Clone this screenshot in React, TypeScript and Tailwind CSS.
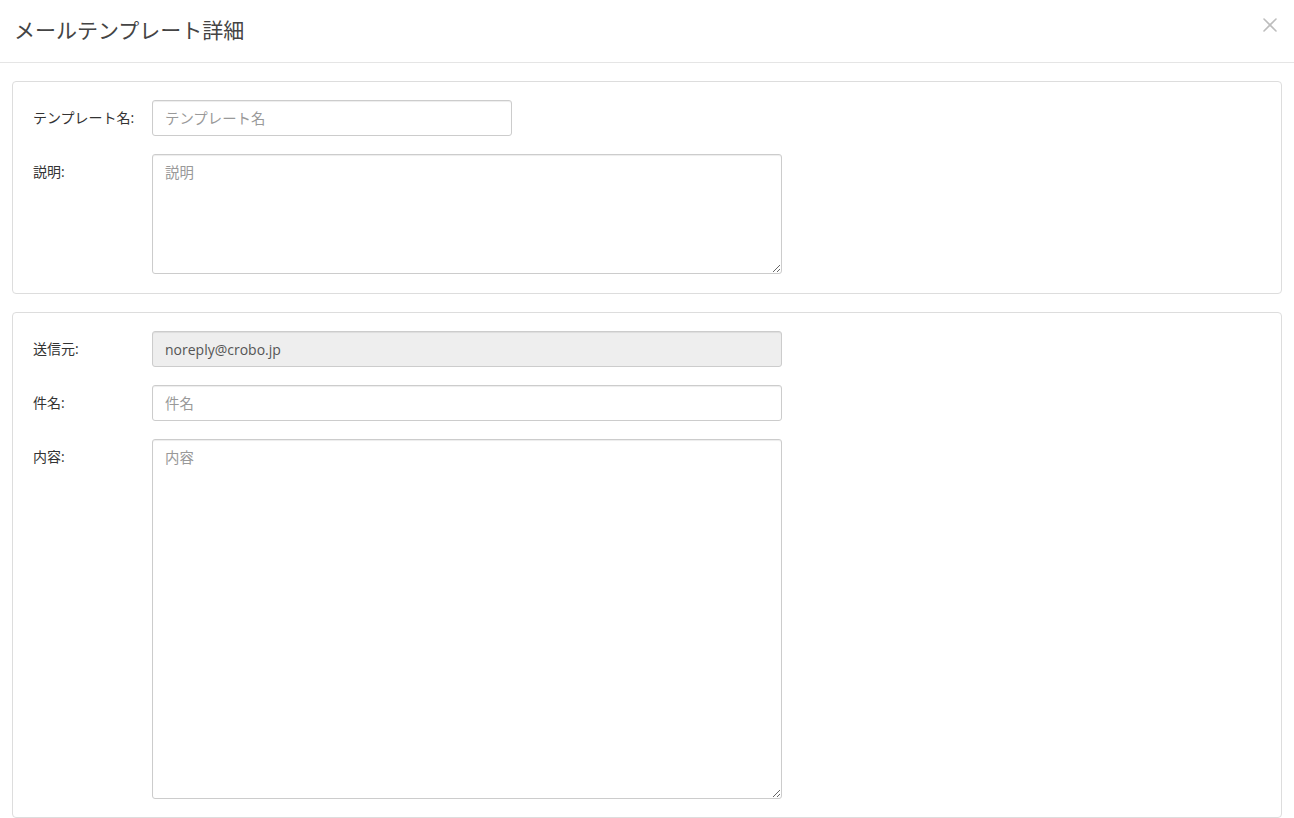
import { X } from "lucide-react";

const font = { fontFamily: '"Open Sans", "Noto Sans CJK JP", sans-serif' };

function Label({ children }: { children: React.ReactNode }) {
  return <label className="w-[139px] shrink-0 pl-5 pt-[8px] text-[14px] text-[#333] leading-[20px]">{children}</label>;
}

const inputCls =
  "h-[36px] rounded-[3px] border border-[#ccc] bg-white px-3 text-[14.4px] text-[#555] placeholder:text-[#999] shadow-[inset_0_1px_1px_rgba(0,0,0,0.075)] outline-none";

const areaCls =
  "rounded-[3px] border border-[#ccc] bg-white px-3 py-[8px] text-[14.4px] leading-[20px] text-[#555] placeholder:text-[#999] shadow-[inset_0_1px_1px_rgba(0,0,0,0.075)] outline-none";

export default function App() {
  return (
    <div className="h-[818px] w-[1294px] overflow-hidden bg-white" style={font}>
      {/* Header */}
      <div className="flex h-[63px] items-center justify-between border-b border-[#e5e5e5] pl-[14px] pr-[12px]">
        <h4 className="text-[21px] text-[#444] font-normal leading-none pb-[2px]">メールテンプレート詳細</h4>
        <X className="mb-[12px] h-[24px] w-[24px] text-[#bdbdbd]" strokeWidth={1.6} />
      </div>

      <div className="flex flex-col gap-[18px] px-[12px] pt-[18px]">
        {/* Panel 1 */}
        <div className="flex flex-col gap-[18px] rounded-[4px] border border-[#ddd] pb-[19px] pt-[18px]">
          <div className="flex">
            <Label>テンプレート名:</Label>
            <input className={`${inputCls} w-[360px]`} placeholder="テンプレート名" />
          </div>
          <div className="flex">
            <Label>説明:</Label>
            <textarea className={`${areaCls} h-[120px] w-[630px]`} placeholder="説明" />
          </div>
        </div>

        {/* Panel 2 */}
        <div className="flex flex-col gap-[18px] rounded-[4px] border border-[#ddd] pb-[18px] pt-[18px]">
          <div className="flex">
            <Label>送信元:</Label>
            <input
              className={`${inputCls} w-[630px] !bg-[#eee] !text-[14px]`}
              value="noreply@crobo.jp"
              readOnly
            />
          </div>
          <div className="flex">
            <Label>件名:</Label>
            <input className={`${inputCls} w-[630px]`} placeholder="件名" />
          </div>
          <div className="flex">
            <Label>内容:</Label>
            <textarea className={`${areaCls} h-[360px] w-[630px]`} placeholder="内容" />
          </div>
        </div>
      </div>
    </div>
  );
}
